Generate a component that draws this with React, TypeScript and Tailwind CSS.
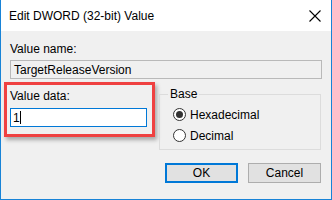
const font = { fontFamily: '"Segoe UI", "Liberation Sans", Arial, sans-serif' };

function Radio({ checked, label }: { checked?: boolean; label: string }) {
  return (
    <div className="flex items-center h-[21px]">
      <span className="w-[13px] h-[13px] rounded-full border border-[#333333] bg-white flex items-center justify-center">
        {checked && <span className="w-[7px] h-[7px] rounded-full bg-[#333333]" />}
      </span>
      <span className="ml-[4px] text-[12px] leading-[14px] text-black">{label}</span>
    </div>
  );
}

export default function App() {
  return (
    <div
      className="w-[332px] h-[200px] flex flex-col overflow-hidden border-l border-r border-b border-[#1883d7] bg-[#f0f0f0] text-black"
      style={font}
    >
      {/* title bar */}
      <div className="h-[31px] bg-white flex items-center justify-between pl-[8px] pr-[10px]">
        <span className="text-[12px] leading-[14px] mt-[1px]">Edit DWORD (32-bit) Value</span>
        <svg width="12" height="12" viewBox="0 0 12 12" className="mt-[1px]">
          <path d="M0.5 0.5 L11.5 11.5 M11.5 0.5 L0.5 11.5" stroke="#000" strokeWidth="1.1" />
        </svg>
      </div>

      <div className="flex flex-col pl-[9px] pr-[9px]">
        <div className="mt-[11px] text-[12px] leading-[14px]">Value name:</div>
        <div className="mt-[4px] h-[19px] w-[312px] border border-[#b9b9b9] flex items-center pl-[3px] text-[12px] leading-[14px]">
          TargetReleaseVersion
        </div>

        <div className="flex items-start mt-[3px]">
          {/* highlighted value data */}
          <div className="ml-[-6px] w-[151px] h-[55px] border-[3px] border-[#ef4141] shadow-[2px_3px_4px_rgba(0,0,0,0.3)] flex flex-col pl-[3px]">
            <div className="mt-[4px] text-[12px] leading-[14px]">Value data:</div>
            <div className="mt-[5px] w-[137px] h-[19px] border border-[#0078d7] bg-white flex items-center pl-[2px] text-[12px] leading-[14px]">
              <span>1</span>
              <span className="w-px h-[13px] bg-black" />
            </div>
          </div>

          {/* Base group */}
          <fieldset className="ml-[4px] mt-[5px] w-[162px] h-[63px] border border-[#dcdcdc] px-[13px]">
            <legend className="ml-[-5px] px-[2px] text-[12px] leading-[14px]">Base</legend>
            <div className="flex flex-col mt-[3px]">
              <Radio checked label="Hexadecimal" />
              <Radio label="Decimal" />
            </div>
          </fieldset>
        </div>

        <div className="flex justify-end gap-[10px] mt-[13px] pr-[1px]">
          <button className="w-[73px] h-[20px] border-2 border-[#0078d7] bg-[#e1e1e1] text-[12px] leading-[14px]">
            OK
          </button>
          <button className="w-[73px] h-[20px] border border-[#adadad] bg-[#e1e1e1] text-[12px] leading-[14px]">
            Cancel
          </button>
        </div>
      </div>
    </div>
  );
}
